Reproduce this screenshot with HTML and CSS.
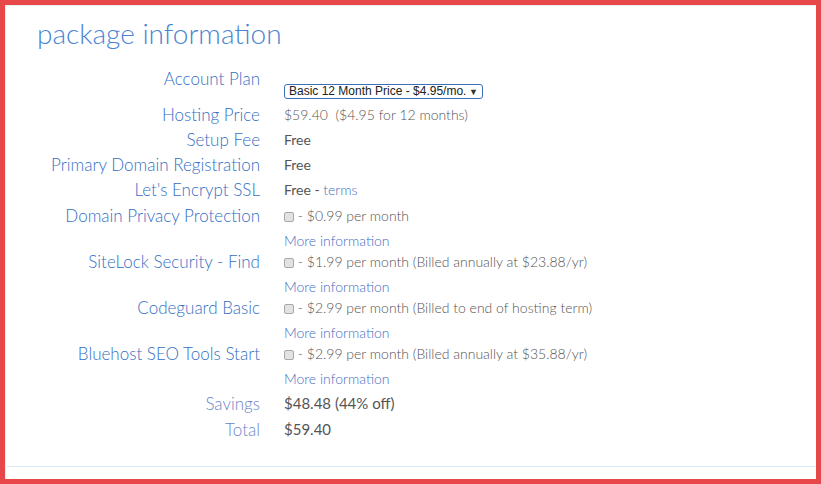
FILE: index.html
```html
<!DOCTYPE html>
<html lang="en">
<head>
    <meta charset="UTF-8">
    <meta name="viewport" content="width=device-width, initial-scale=1.0">
    <title>Package Information</title>
    <link rel="stylesheet" href="styles.css">
</head>
<body>
    <div class="frame">
        <div class="panel">
            <h2 class="title">package information</h2>

            <div class="info">
                <div class="row plan-row">
                    <div class="label">Account Plan</div>
                    <div class="value plan-value">
                        <span class="select-wrap">
                            <select class="plan-select">
                                <option>Basic 12 Month Price - $4.95/mo.</option>
                            </select>
                        </span>
                    </div>
                </div>
                <div class="row">
                    <div class="label">Hosting Price</div>
                    <div class="value light">$59.40&nbsp; ($4.95 for 12 months)</div>
                </div>
                <div class="row">
                    <div class="label">Setup Fee</div>
                    <div class="value dark">Free</div>
                </div>
                <div class="row">
                    <div class="label">Primary Domain Registration</div>
                    <div class="value dark">Free</div>
                </div>
                <div class="row">
                    <div class="label">Let's Encrypt SSL</div>
                    <div class="value dark">Free - <a class="link" href="#">terms</a></div>
                </div>

                <div class="extras">
                    <div class="row opt">
                        <div class="label">Domain Privacy Protection</div>
                        <div class="value light">
                            <div><span class="check"></span> - $0.99 per month</div>
                            <a class="more" href="#">More information</a>
                        </div>
                    </div>
                    <div class="row opt">
                        <div class="label">SiteLock Security - Find</div>
                        <div class="value light">
                            <div><span class="check"></span> - $1.99 per month (Billed annually at $23.88/yr)</div>
                            <a class="more" href="#">More information</a>
                        </div>
                    </div>
                    <div class="row opt">
                        <div class="label">Codeguard Basic</div>
                        <div class="value light">
                            <div><span class="check"></span> - $2.99 per month (Billed to end of hosting term)</div>
                            <a class="more" href="#">More information</a>
                        </div>
                    </div>
                    <div class="row opt">
                        <div class="label">Bluehost SEO Tools Start</div>
                        <div class="value light">
                            <div><span class="check"></span> - $2.99 per month (Billed annually at $35.88/yr)</div>
                            <a class="more" href="#">More information</a>
                        </div>
                    </div>
                </div>

                <div class="totals">
                    <div class="row">
                        <div class="label">Savings</div>
                        <div class="value">$48.48 (44% off)</div>
                    </div>
                    <div class="row">
                        <div class="label">Total</div>
                        <div class="value">$59.40</div>
                    </div>
                </div>
            </div>

            <div class="rule"></div>
        </div>
    </div>
</body>
</html>
```

FILE: styles.css
```css
html, body {
    margin: 0;
    padding: 0;
}

body {
    font-family: Lato, "Open Sans", sans-serif;
    background: #ffffff;
}

.frame {
    width: 821px;
    height: 484px;
    box-sizing: border-box;
    border: 5px solid #e8474a;
    background: #ffffff;
}

.panel {
    height: 100%;
    display: flex;
    flex-direction: column;
    border-top: 1px solid #ececec;
    border-left: 1px solid #f0f0f0;
    box-sizing: border-box;
}

.title {
    margin: 10px 0 0 31px;
    font-size: 28px;
    font-weight: 300;
    line-height: 34px;
    color: #4a84d3;
}

.info {
    margin-top: 16px;
}

/* label / value rows */
.row {
    display: flex;
    line-height: 25px;
}

.label {
    width: 254px;
    flex: none;
    text-align: right;
    font-size: 17px;
    font-weight: 300;
    color: #346fc4;
}

.value {
    margin-left: 24px;
    font-size: 14px;
    color: #707070;
}

.value.light {
    font-weight: 300;
    color: #555555;
}

.value.dark {
    color: #555555;
}

.link {
    color: #3d6fc0;
    font-weight: 300;
    text-decoration: none;
}

/* account plan select */
.plan-row {
    height: 36px;
}

.plan-value {
    display: flex;
    align-items: flex-end;
    padding-bottom: 3px;
}

.select-wrap {
    position: relative;
    display: inline-block;
    line-height: 0;
}

.plan-select {
    appearance: none;
    -webkit-appearance: none;
    width: 199px;
    height: 15px;
    padding: 0 0 0 4px;
    border: 1px solid #3d6fb8;
    border-radius: 3px;
    background: #ffffff;
    font-family: "Liberation Sans", Arial, sans-serif;
    font-size: 12px;
    line-height: 13px;
    color: #222222;
}

.select-wrap::after {
    content: "\25BC";
    position: absolute;
    right: 5px;
    top: 3px;
    font-size: 9px;
    line-height: 9px;
    color: #333333;
    pointer-events: none;
}

/* optional extras */
.extras {
    margin-top: 3px;
}

.row.opt {
    line-height: 21px;
}

.check {
    display: inline-block;
    width: 8px;
    height: 8px;
    border: 1px solid #a9a9a9;
    border-radius: 2px;
    background: #e2e2e2;
    vertical-align: -1px;
}

.more {
    display: block;
    padding-top: 4px;
    color: #3f6cc2;
    font-weight: 300;
    text-decoration: none;
}

.totals {
    margin-top: 2px;
}

.totals .row + .row {
    margin-top: 1px;
}

.totals .label {
    font-weight: 300;
    font-size: 17px;
    color: #6a86c6;
}

.totals .value {
    font-size: 15px;
    color: #555555;
}

.rule {
    margin-top: auto;
    margin-bottom: 12px;
    margin-left: 1px;
    border-top: 1px solid #d6e7f6;
}
```
